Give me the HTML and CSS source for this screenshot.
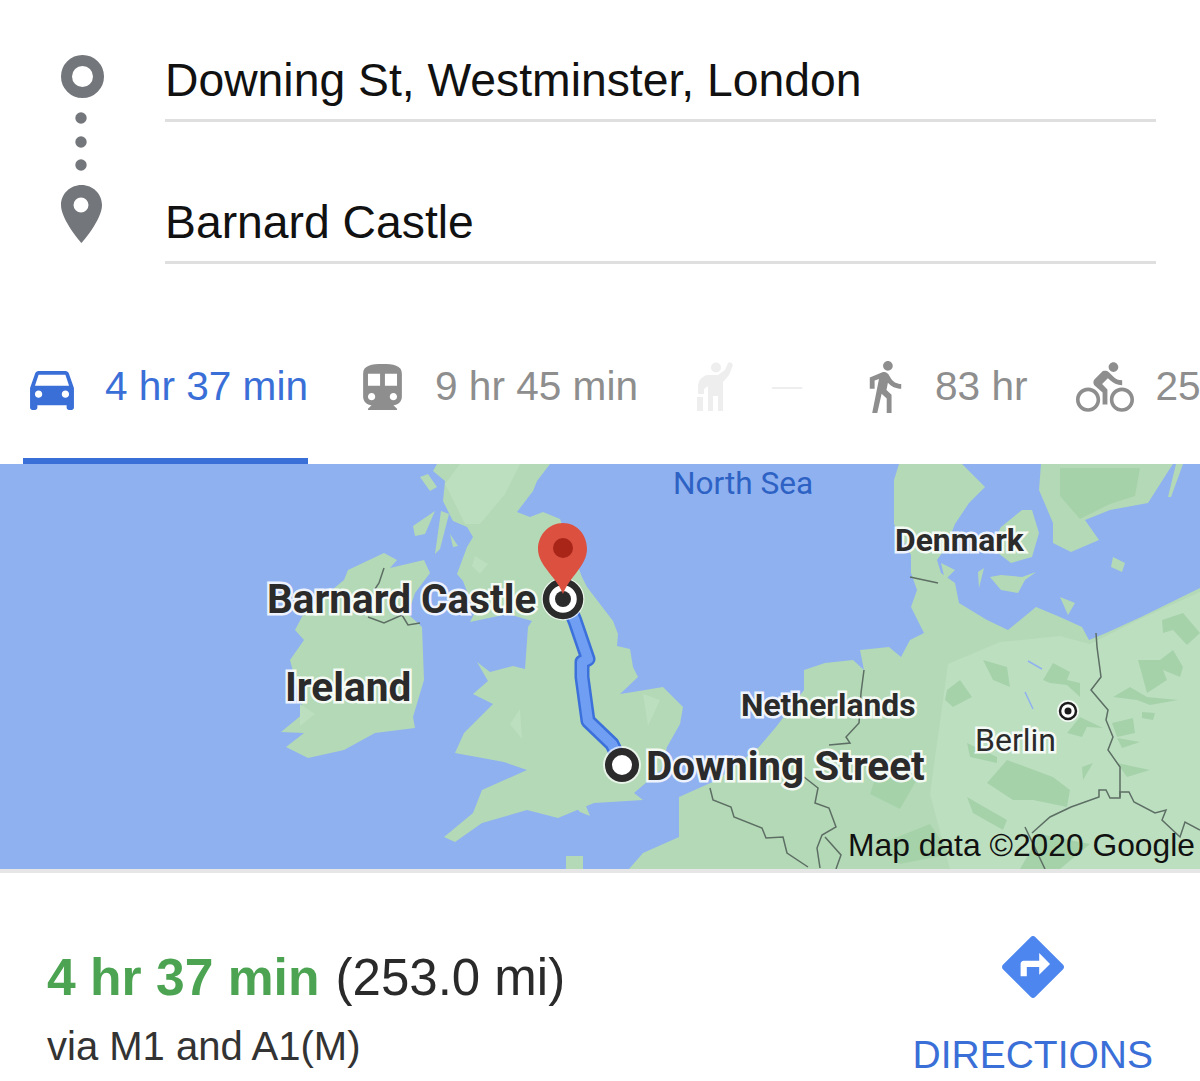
FILE: index.html
```html
<!DOCTYPE html>
<html lang="en">
<head>
  <meta charset="UTF-8">
  <meta name="viewport" content="width=device-width, initial-scale=1.0">
  <title>Downing St to Barnard Castle</title>
  <link rel="stylesheet" href="styles.css">
</head>
<body>

<div class="page">

  <!-- From / to fields -->
  <div class="stops">
    <svg class="stops-icons" viewBox="0 0 165 264" width="165" height="264">
      <circle cx="82.5" cy="76.5" r="16" fill="none" stroke="#73767a" stroke-width="11"/>
      <circle cx="81" cy="118" r="5.7" fill="#73767a"/>
      <circle cx="81" cy="142" r="5.7" fill="#73767a"/>
      <circle cx="81" cy="165" r="5.7" fill="#73767a"/>
      <path fill="#73767a" fill-rule="evenodd" d="M81.5 185C70 185 61 194 61 205c0 15 20.5 38 20.5 38S102 220 102 205C102 194 93 185 81.5 185zM81 197.500a7.500 7.500 0 1 1 0 15a7.500 7.500 0 1 1 0-15z"/>
    </svg>
    <div class="stops-fields">
      <div class="stop-field">Downing St, Westminster, London</div>
      <div class="stop-field">Barnard Castle</div>
    </div>
  </div>

  <!-- Travel modes -->
  <div class="tabs">
    <div class="tab tab-car active">
      <svg class="icon" viewBox="3 5 18 16" width="44" height="39"><path d="M18.920 6.010C18.720 5.420 18.160 5 17.500 5h-11c-.66 0-1.210.42-1.420 1.010L3 12v8c0 .55.45 1 1 1h1c.55 0 1-.45 1-1v-1h12v1c0 .55.45 1 1 1h1c.55 0 1-.45 1-1v-8l-2.080-5.990zM6.500 16c-.83 0-1.500-.67-1.500-1.500S5.670 13 6.500 13s1.500.67 1.500 1.500S7.330 16 6.500 16zm11 0c-.83 0-1.500-.67-1.500-1.500s.67-1.500 1.500-1.500 1.500.67 1.500 1.500-.67 1.500-1.500 1.500zM5 11l1.500-4.500h11L19 11H5z"/></svg>
      <span class="tab-time">4 hr 37 min</span>
    </div>
    <div class="tab tab-train">
      <svg class="icon" viewBox="4 2 16 19" width="39" height="46"><path d="M12 2c-4.420 0-8 .5-8 4v9.500C4 17.430 5.570 19 7.500 19L6 20.500v.5h12v-.5L16.500 19c1.930 0 3.500-1.570 3.500-3.500V6c0-3.500-3.580-4-8-4zM7.500 17c-.83 0-1.500-.67-1.500-1.500S6.670 14 7.500 14s1.500.67 1.500 1.500S8.330 17 7.500 17zm3.500-6H6V6h5v5zm5.500 6c-.83 0-1.500-.67-1.500-1.500s.67-1.500 1.500-1.500 1.500.67 1.500 1.500-.67 1.500-1.500 1.500zm1.500-6h-5V6h5v5z"/></svg>
      <span class="tab-time">9 hr 45 min</span>
    </div>
    <div class="tab tab-hail disabled">
      <svg class="icon" viewBox="0 0 38 50" width="38" height="50">
        <circle cx="21" cy="5.500" r="5"/>
        <path d="M13 13H23L30 8L33 1Q36-1 38 3L34 13L28 20V49H23V34H18V49H13V24L9 27V32H3V25Q3 18 8 15Q10 13 13 13z"/>
        <rect x="2" y="35" width="6" height="14"/>
      </svg>
      <span class="tab-time">—</span>
    </div>
    <div class="tab tab-walk">
      <svg class="icon" viewBox="6 1.500 13 21.500" width="33" height="52"><path d="M13.500 5.500c1.100 0 2-.9 2-2s-.9-2-2-2-2 .9-2 2 .9 2 2 2zM9.800 8.900L7 23h2.100l1.800-8 2.100 2v6h2v-7.500l-2.100-2 .6-3C14.800 12 16.800 13 19 13v-2c-1.900 0-3.500-1-4.300-2.400l-1-1.600c-.4-.6-1-1-1.700-1-.3 0-.5.1-.8.1L6 8.300V13h2V9.600l1.800-.7"/></svg>
      <span class="tab-time">83 hr</span>
    </div>
    <div class="tab tab-bike">
      <svg class="icon" viewBox="0 1.500 24 20.500" width="58" height="50"><path d="M15.500 5.500c1.100 0 2-.9 2-2s-.9-2-2-2-2 .9-2 2 .9 2 2 2zM5 12c-2.800 0-5 2.200-5 5s2.200 5 5 5 5-2.200 5-5-2.200-5-5-5zm0 8.500c-1.900 0-3.500-1.600-3.500-3.500s1.600-3.500 3.500-3.500 3.500 1.600 3.500 3.500-1.600 3.500-3.500 3.500zm5.800-10l2.400-2.400.8.8c1.300 1.300 3 2.100 5.100 2.100V9c-1.500 0-2.700-.6-3.600-1.500l-1.900-1.900c-.5-.4-1-.6-1.600-.6s-1.100.2-1.400.6L7.800 8.400c-.4.4-.6.9-.6 1.400 0 .6.2 1.100.6 1.400L11 14v5h2v-6.200l-2.200-2.300zM19 12c-2.800 0-5 2.200-5 5s2.200 5 5 5 5-2.200 5-5-2.200-5-5-5zm0 8.500c-1.900 0-3.500-1.600-3.500-3.500s1.600-3.500 3.500-3.500 3.500 1.600 3.500 3.500-1.600 3.500-3.500 3.500z"/></svg>
      <span class="tab-time">25</span>
    </div>
  </div>

  <!-- Map -->
  <div class="map">
    <svg class="map-art" viewBox="0 0 1200 405" width="1200" height="405">
      <g fill="#b4d9b6">
        <!-- Great Britain -->
        <path d="M550 0L537 17L533 27L517 48L530 53L543 48L560 55L582 113L587 123L613 157L618 170L617 182L630 185L633 203L638 213L620 230L633 228L663 223L683 243L680 260L667 283L661 306L634 329L643 336L594 339L558 354L527 346L482 359L455 378L444 373L473 349L482 326L527 306L504 298L455 289L464 269L493 240L473 230L488 217L477 198L490 208L513 202L525 205L528 163L532 157L508 150L470 158L475 148L463 117L457 110L467 83L473 73L467 63L453 57L443 37L445 17L433 7L437 0z"/>
        <path d="M420 13L428 10L437 23L430 27z"/>
        <path d="M413 62L435 47L425 70L415 72z"/>
        <path d="M441 47L449 50L440 85L435 90z"/>
        <path d="M450 70L458 82L453 83z"/>
        <path d="M576 344L586 342L590 352L580 348z"/>
        <!-- Ireland -->
        <path d="M384 89L397 96L390 104L424 96L430 109L415 129L408 150L422 163L424 216L413 253L415 264L375 269L344 286L308 294L286 283L304 269L281 268L304 249L290 196L304 176L295 166L304 149L344 116L348 106z"/>
        <!-- Continent -->
        <path d="M629 405L643 389L679 373L679 333L717 316L759 283L776 263L804 226L804 206L825 199L853 196L864 206L860 186L889 183L901 193L910 176L924 169L911 143L917 126L911 109L911 91L894 60L894 16L899 0L962 0L985 23L969 39L955 60L945 85L937 96L941 109L955 119L959 139L987 156L1008 166L1036 143L1060 153L1082 163L1089 176L1106 169L1141 153L1200 124L1200 405z"/>
        <path d="M566 405L566 392L583 392L583 405z"/>
        <!-- Danish and Baltic islands -->
        <path d="M1001 63L1022 46L1032 46L1039 69L1032 93L1011 99L990 83z"/>
        <path d="M941 99L955 106L945 116z"/>
        <path d="M990 113L1001 111L1022 113L1036 108L1025 116L1018 129L1001 126z"/>
        <path d="M1041 0L1039 26L1053 59L1053 79L1071 88L1099 76L1085 56L1110 46L1148 39L1169 6L1173 0z"/>
        <path d="M1176 0L1183 0L1171 33L1168 33z"/>
        <path d="M1113 93L1125 99L1122 108L1111 103z"/>
        <path d="M1060 133L1075 139L1068 151z"/>
        <path d="M978 108L984 104L979 124z"/>
      </g>

      <!-- Lighter lowland and highland -->
      <g fill="#bcdfc0">
        <path d="M948 200L1000 178L1060 172L1090 180L1140 155L1200 128L1200 405L950 405L930 330z"/>
        <path d="M445 20L460 0L520 0L505 30L480 60L465 60z"/>
        <path d="M475 92L488 100L480 110L472 102z"/>
        <path d="M510 260L520 245L522 275z"/>
        <path d="M300 240L315 250L300 262z"/>
        <path d="M643 230L660 236L648 262z"/>
      </g>

      <!-- Forest patches -->
      <g fill="#a6d2aa">
        <path d="M1060 4L1140 4L1135 32L1110 40L1080 55L1060 32z"/>
        <path d="M1043 216L1053 199L1070 208L1067 216L1080 219L1080 233L1067 221L1050 219z"/>
        <path d="M1067 269L1080 253L1103 264L1087 263L1082 273z"/>
        <path d="M1138 196L1160 196L1173 186L1183 203L1180 213L1163 206L1167 216L1147 229z"/>
        <path d="M1113 233L1130 223L1147 233L1178 236L1150 241L1137 236z"/>
        <path d="M1162 156L1183 149L1200 169L1187 181L1173 166L1163 169z"/>
        <path d="M1112 259L1133 254L1135 269L1117 273z"/>
        <path d="M1117 274L1140 278L1122 284z"/>
        <path d="M1117 299L1150 306L1127 313z"/>
        <path d="M1142 248L1155 249L1153 256L1142 254z"/>
        <path d="M1082 303L1093 299L1083 316z"/>
        <path d="M987 319L1007 296L1053 313L1070 326L1067 343L1033 336L1013 336z"/>
        <path d="M967 333L1007 356L1003 366L973 349z"/>
        <path d="M947 226L960 216L972 233L953 243L945 236z"/>
        <path d="M967 279L997 293L997 299L970 293z"/>
        <path d="M983 196L1007 203L1010 223L993 216z"/>
        <path d="M880 380L930 360L950 390L900 400z"/>
        <path d="M1040 370L1090 380L1060 405L1020 405z"/>
        <path d="M880 300L920 310L900 345L870 330z"/>
      </g>
      <path d="M1028 197L1042 205M1025 228L1033 245" fill="none" stroke="#8fb1f0" stroke-width="1.500"/>

      <!-- Borders -->
      <g fill="none" stroke="#5d6e64" stroke-width="1.500">
        <path d="M384 104L379 119L375 125"/>
        <path d="M368 153L384 159L402 151L408 161L420 159"/>
        <path d="M910 113L938 119"/>
        <path d="M864 206L861 229L859 259L846 273L850 279L829 281"/>
        <path d="M710 324L713 336L731 343L734 353L762 364L766 374L783 373L787 389L808 403"/>
        <path d="M804 313L818 324L815 339L829 344L836 363L822 371L817 384L820 404"/>
        <path d="M825 373L841 391L836 405"/>
        <path d="M1096 169L1097 183L1101 213L1091 226L1108 246L1106 256L1113 273L1108 286L1120 303L1120 333"/>
        <path d="M1032 369L1050 353L1071 343L1099 333L1099 326L1106 326L1110 334L1120 334L1120 328L1129 328L1134 338L1155 349L1166 346L1162 356L1180 373L1185 358L1200 366"/>
        <path d="M1025 363L1045 405"/>
      </g>

      <!-- Route -->
      <path d="M570 145L575 157L588 195L582 198L582 213L588 257L612 280L622 301" fill="none" stroke="#3c70da" stroke-width="15" stroke-linejoin="round"/>
      <path d="M570 145L575 157L588 195L582 198L582 213L588 257L612 280L622 301" fill="none" stroke="#6f9ef2" stroke-width="10" stroke-linejoin="round"/>

      <!-- Markers -->
      <circle cx="622" cy="301" r="19" fill="#fff" opacity=".7"/>
      <circle cx="622" cy="301" r="13.500" fill="#fff" stroke="#2b2b2b" stroke-width="7"/>
      <circle cx="563" cy="135" r="21.500" fill="#fff" opacity=".7"/>
      <circle cx="563" cy="135" r="17" fill="#fff" stroke="#2b2b2b" stroke-width="6.500"/>
      <circle cx="563" cy="135" r="8" fill="#2b2b2b"/>
      <circle cx="1068" cy="247" r="11" fill="#fff" opacity=".8"/>
      <circle cx="1068" cy="247" r="8" fill="#fff" stroke="#1c1c1c" stroke-width="2.500"/>
      <circle cx="1068" cy="247" r="3.500" fill="#1c1c1c"/>
      <path d="M563 59C549 59 538 71 538 85C538 102 557 113 563 130C569 113 587 102 587 85C587 71 577 59 563 59z" fill="#dc5040"/>
      <circle cx="563" cy="84" r="10" fill="#a82518"/>
    </svg>

    <span class="map-label label-sea">North Sea</span>
    <span class="map-label label-denmark">Denmark</span>
    <span class="map-label label-barnard">Barnard Castle</span>
    <span class="map-label label-ireland">Ireland</span>
    <span class="map-label label-netherlands">Netherlands</span>
    <span class="map-label label-berlin">Berlin</span>
    <span class="map-label label-downing">Downing Street</span>
    <span class="map-credit">Map data ©2020 Google</span>
  </div>

  <!-- Summary -->
  <div class="summary">
    <div class="summary-text">
      <div class="summary-title"><span class="summary-time">4 hr 37 min</span> (253.0 mi)</div>
      <div class="summary-via">via M1 and A1(M)</div>
    </div>
    <div class="directions">
      <svg class="directions-icon" viewBox="2 2 20 20" width="62" height="62"><path d="M21.710 11.290l-9-9c-.39-.39-1.020-.39-1.410 0l-9 9c-.39.39-.39 1.020 0 1.410l9 9c.39.39 1.020.39 1.410 0l9-9c.39-.38.39-1.010 0-1.410zM14 14.500V12h-4v3H8v-4c0-.55.45-1 1-1h5V7.500l3.500 3.500-3.500 3.500z"/></svg>
      <span class="directions-label">DIRECTIONS</span>
    </div>
  </div>

</div>

</body>
</html>
```

FILE: styles.css
```css
body {
  margin: 0;
  background-color: #fff;
  font-family: "Liberation Sans", Arial, sans-serif;
  color: #111;
}

.page {
  width: 1200px;
  height: 1081px;
  overflow: hidden;
}

/* From / to fields */
.stops {
  display: flex;
  height: 264px;
}

.stops-icons {
  flex: none;
}

.stops-fields {
  width: 991px;
  padding-top: 40px;
}

.stop-field {
  height: 79px;
  line-height: 80px;
  font-size: 46.3px;
  border-bottom: 3px solid #dfdfdf;
  margin-bottom: 60px;
  white-space: nowrap;
}

/* Travel modes */
.tabs {
  display: flex;
  height: 104px;
  margin-top: 96px;
  padding-left: 23px;
  white-space: nowrap;
}

.tab {
  display: flex;
  flex: none;
  align-items: center;
  height: 54px;
  padding-bottom: 44px;
  border-bottom: 6px solid transparent;
  color: #8e8e8e;
  fill: #8e8e8e;
  font-size: 40.6px;
}

.tab .icon {
  flex: none;
}

.tab-time {
  margin-top: -2px;
}

.tab.active {
  color: #3a6fd8;
  fill: #3a6fd8;
  border-bottom-color: #3a6fd8;
}

.tab.disabled {
  color: #eeeeee;
  fill: #eeeeee;
  font-size: 30px;
}

.tab-car {
  padding-left: 7px;
  width: 278px;
  gap: 31px;
}

.tab-car .icon {
  margin-top: 6px;
}

.tab-train {
  margin-left: 55px;
  gap: 33px;
}

.tab-hail {
  margin-left: 57px;
  gap: 39px;
}

.tab-walk {
  margin-left: 67px;
  gap: 33px;
}

.tab-bike {
  margin-left: 48px;
  gap: 22px;
}

/* Map */
.map {
  position: relative;
  height: 405px;
  background-color: #8fb1f0;
  border-bottom: 4px solid #e6e6e6;
  overflow: hidden;
}

.map-art {
  display: block;
}

.map-label {
  position: absolute;
  font-family: Roboto, "Liberation Sans", sans-serif;
  font-weight: 700;
  color: #2b2b2b;
  line-height: 1;
  white-space: nowrap;
  -webkit-text-stroke: 5px rgba(255, 255, 255, 0.85);
  paint-order: stroke fill;
}

.label-sea {
  left: 673px;
  top: 4px;
  font-size: 31.6px;
  font-weight: 400;
  color: #2d62c4;
  -webkit-text-stroke: 0;
}

.label-denmark {
  left: 895px;
  top: 61px;
  font-size: 31.8px;
}

.label-barnard {
  left: 267px;
  top: 115px;
  font-size: 40.5px;
}

.label-ireland {
  left: 285px;
  top: 203px;
  font-size: 40.6px;
}

.label-netherlands {
  left: 741px;
  top: 226px;
  font-size: 31.8px;
}

.label-berlin {
  left: 975px;
  top: 260px;
  font-size: 32px;
  font-weight: 400;
}

.label-downing {
  left: 646px;
  top: 282px;
  font-size: 40.5px;
}

.map-credit {
  position: absolute;
  right: 5px;
  bottom: 7px;
  font-size: 31.8px;
  line-height: 1;
  color: #111;
  white-space: nowrap;
}

/* Summary */
.summary {
  display: flex;
  justify-content: space-between;
  height: 208px;
}

.summary-text {
  padding-left: 47px;
  padding-top: 74px;
}

.summary-title {
  font-size: 51px;
  line-height: 60px;
  color: #2a2a2a;
  white-space: nowrap;
}

.summary-time {
  color: #4ca352;
  font-weight: 700;
  font-size: 51.6px;
  margin-right: 2px;
}

.summary-via {
  margin-top: 16px;
  font-size: 40px;
  line-height: 44px;
  color: #333;
  white-space: nowrap;
}

.directions {
  display: flex;
  flex-direction: column;
  align-items: center;
  padding-top: 63px;
  margin-right: 47px;
}

.directions-icon {
  fill: #4c86ee;
  margin-bottom: 34px;
}

.directions-label {
  font-size: 39px;
  line-height: 46px;
  color: #3a6fd8;
}
```
